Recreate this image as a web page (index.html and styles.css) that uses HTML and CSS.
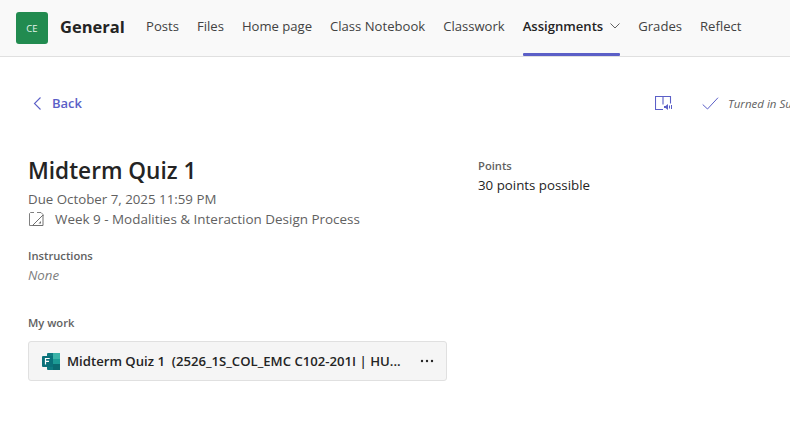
FILE: index.html
```html
<!DOCTYPE html>
<html lang="en">
<head>
    <meta charset="UTF-8">
    <title>Midterm Quiz 1</title>
    <link rel="stylesheet" href="styles.css">
</head>
<body>
    <header class="top-bar">
        <div class="team-logo">CE</div>
        <div class="channel-name">General</div>
        <nav class="tabs">
            <a class="tab">Posts</a>
            <a class="tab">Files</a>
            <a class="tab">Home page</a>
            <a class="tab">Class Notebook</a>
            <a class="tab">Classwork</a>
            <a class="tab tab--active">
                Assignments
                <svg class="tab__chevron" width="10" height="6" viewBox="0 0 10 6"><path d="M.5.5 5 5 9.500.5" fill="none" stroke="#616161"/></svg>
            </a>
            <a class="tab">Grades</a>
            <a class="tab">Reflect</a>
        </nav>
    </header>

    <main class="page">
        <div class="toolbar">
            <a class="back">
                <svg width="9" height="13" viewBox="0 0 9 13"><path d="M7.500.5 1.500 6.500l6 6" fill="none" stroke="#5b5fc7" stroke-width="1.100"/></svg>
                Back
            </a>
            <div class="toolbar__right">
                <svg class="reader-icon" width="18" height="15" viewBox="0 0 18 15">
                    <path d="M8 13.500H.5V.5h15v7M8 .5v8" fill="none" stroke="#5b5fc7" stroke-width="1.100"/>
                    <path d="M9 10h1.500L13 8v6l-2.500-2H9z" fill="#5b5fc7"/>
                    <path d="M14.500 9.500v3M16.500 9v4" fill="none" stroke="#5b5fc7"/>
                </svg>
                <div class="status">
                    <svg width="17" height="13" viewBox="0 0 17 13"><path d="M.7 7.500 5.500 12 16 .7" fill="none" stroke="#5b5fc7"/></svg>
                    <span>Turned in Su</span>
                </div>
            </div>
        </div>

        <div class="columns">
            <section class="details">
                <h1 class="title">Midterm Quiz 1</h1>
                <div class="due">Due October 7, 2025 11:59 PM</div>
                <div class="category">
                    <svg width="17" height="17" viewBox="0 0 17 17">
                        <path d="M6 1.500H2.500l-1 1v12h11.500M9 1.500h4l2 2v1.500" fill="none" stroke="#808080"/>
                        <path d="M4.500 14.500 15 4v10.500z" fill="none" stroke="#707070"/>
                        <path d="M10.500 12.500l2.500-2.500v2.500z" fill="#707070"/>
                    </svg>
                    <span>Week 9 - Modalities &amp; Interaction Design Process</span>
                </div>

                <div class="label label--instructions">Instructions</div>
                <div class="none">None</div>

                <div class="label label--work">My work</div>
                <div class="work-card">
                    <svg class="forms-icon" width="18" height="17" viewBox="0 0 18 17">
                        <rect x="5" y="0" width="13" height="17" rx="1" fill="#0f7a80"/>
                        <rect x="11" y="0" width="7" height="6" fill="#3bb3a8"/>
                        <rect x="11" y="6" width="7" height="5" fill="#1c9a94"/>
                        <rect x="11" y="11" width="7" height="6" fill="#0b6a70"/>
                        <rect x="0" y="3" width="11" height="11" rx="1" fill="#0a717a"/>
                        <path d="M3.500 11.500v-6h4.200M3.500 8.300h3.500" fill="none" stroke="#fff" stroke-width="1.200"/>
                    </svg>
                    <span class="work-card__name">Midterm Quiz 1&nbsp; (2526_1S_COL_EMC C102-201I | HU...</span>
                    <svg class="work-card__more" width="14" height="4" viewBox="0 0 14 4">
                        <circle cx="2" cy="2" r="1.200" fill="#242424"/>
                        <circle cx="7" cy="2" r="1.200" fill="#242424"/>
                        <circle cx="12" cy="2" r="1.200" fill="#242424"/>
                    </svg>
                </div>
            </section>

            <section class="points">
                <div class="label">Points</div>
                <div class="points__value">30 points possible</div>
            </section>
        </div>
    </main>
</body>
</html>
```

FILE: styles.css
```css
* {
    box-sizing: border-box;
}

html,
body {
    height: 100%;
}

body {
    margin: 0;
    overflow: hidden;
    background: #fff;
    color: #242424;
    font-family: "Open Sans", "Noto Sans", sans-serif;
    font-size: 13.300px;
}

/* top bar */
.top-bar {
    display: flex;
    align-items: center;
    height: 57px;
    padding-left: 16px;
    background: #f9f9f9;
    border-bottom: 1px solid #e0e0e0;
}

.team-logo {
    display: flex;
    align-items: center;
    justify-content: center;
    width: 32px;
    height: 32px;
    margin-right: 12px;
    background: #228b50;
    border-radius: 3px;
    color: #e4f2ea;
    font-size: 9.500px;
}

.channel-name {
    width: 86px;
    padding-bottom: 3px;
    font-size: 16.500px;
    font-weight: 700;
}

.tabs {
    display: flex;
    gap: 18px;
    height: 56px;
}

.tab {
    position: relative;
    display: flex;
    align-items: center;
    gap: 7px;
    padding-bottom: 5px;
    color: #424242;
    font-size: 13.100px;
    white-space: nowrap;
}

.tab--active {
    color: #242424;
    font-weight: 600;
}

.tab--active:after {
    content: "";
    position: absolute;
    left: 0;
    right: 0;
    bottom: 0;
    height: 3px;
    background: #5b5fc7;
    border-radius: 1px;
}

/* page */
.page {
    padding: 0 0 0 28px;
}

.toolbar {
    display: flex;
    align-items: center;
    justify-content: space-between;
    height: 92px;
    margin-bottom: 8px;
    padding-left: 5px;
}

.back {
    display: flex;
    align-items: center;
    gap: 10px;
    color: #5b5fc7;
    font-size: 13px;
    font-weight: 600;
}

.toolbar__right {
    display: flex;
    align-items: center;
    gap: 29px;
    width: 135px;
    flex: none;
    white-space: nowrap;
}

.reader-icon {
    flex: none;
}

.status {
    display: flex;
    align-items: center;
    gap: 9px;
    color: #616161;
    font-size: 11.500px;
    font-style: italic;
}

.columns {
    display: flex;
}

.details {
    width: 419px;
    margin-right: 31px;
}

.title {
    margin: 0;
    font-size: 22.600px;
    font-weight: 600;
    line-height: 28px;
}

.due {
    margin-top: 5px;
    color: #616161;
    line-height: 19px;
}

.category {
    display: flex;
    align-items: center;
    gap: 10px;
    height: 20px;
    color: #616161;
    font-size: 13.450px;
}

.label {
    color: #616161;
    font-size: 11.200px;
    font-weight: 600;
    line-height: 16px;
}

.label--instructions {
    margin-top: 19px;
}

.none {
    margin-top: 2px;
    color: #808080;
    font-style: italic;
    line-height: 18px;
}

.label--work {
    margin-top: 31px;
}

.work-card {
    display: flex;
    align-items: center;
    height: 40px;
    margin-top: 10px;
    padding: 0 12px 0 13px;
    background: #f5f5f5;
    border: 1px solid #e0e0e0;
    border-radius: 3px;
}

.forms-icon {
    flex: none;
    margin-right: 7px;
}

.work-card__name {
    flex: 1;
    font-size: 13.150px;
    font-weight: 600;
    white-space: nowrap;
    overflow: hidden;
}

.work-card__more {
    flex: none;
}

.points {
    padding-top: 1px;
}

.points__value {
    margin-top: 2px;
    line-height: 18px;
}
```
